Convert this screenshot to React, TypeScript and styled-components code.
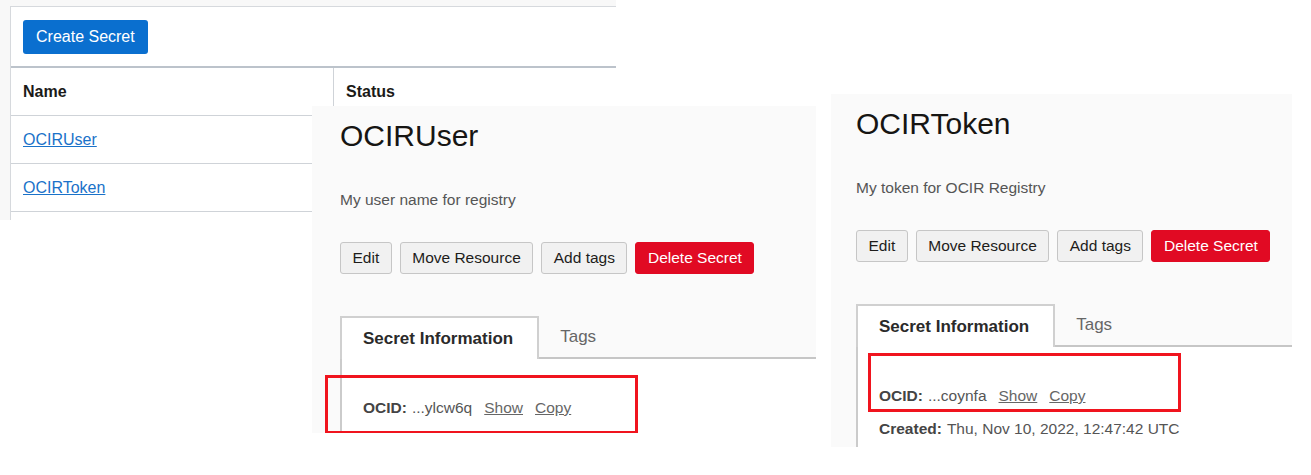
import styled, { createGlobalStyle } from "styled-components";

const GlobalStyle = createGlobalStyle`
  html, body {
    margin: 0;
    padding: 0;
    background: #fff;
  }
  body {
    font-family: "Liberation Sans", Arial, Helvetica, sans-serif;
    color: #161513;
  }
  * {
    box-sizing: border-box;
  }
`;

interface Secret {
  name: string;
  description: string;
  ocid: string;
  created?: string;
}

const secrets: Secret[] = [
  { name: "OCIRUser", description: "My user name for registry", ocid: "...ylcw6q" },
  {
    name: "OCIRToken",
    description: "My token for OCIR Registry",
    ocid: "...coynfa",
    created: "Thu, Nov 10, 2022, 12:47:42 UTC",
  },
];

// where each screenshot sits on the collage
const shots = [
  { x: 312, y: 106, w: 504, h: 327, pad: 28, box: { x: 13, y: 269, w: 313, h: 59 } },
  { x: 831, y: 94, w: 461, h: 353, pad: 25, box: { x: 37, y: 259, w: 313, h: 59 } },
];

const SecretDetail = ({ secret, pad, box }: { secret: Secret; pad: number; box: { x: number; y: number; w: number; h: number } }) => (
  <DetailPanel $pad={pad}>
    <Title>{secret.name}</Title>
    <Description>{secret.description}</Description>
    <Actions>
      <ActionButton>Edit</ActionButton>
      <ActionButton>Move Resource</ActionButton>
      <ActionButton>Add tags</ActionButton>
      <ActionButton $danger>Delete Secret</ActionButton>
    </Actions>
    <TabStrip>
      <Tab $active>Secret Information</Tab>
      <Tab>Tags</Tab>
      <TabFiller />
    </TabStrip>
    <TabBody>
      <InfoRow>
        <Label>OCID:</Label>
        <Value>{secret.ocid}</Value>
        <InfoLink>Show</InfoLink>
        <InfoLink>Copy</InfoLink>
      </InfoRow>
      {secret.created && (
        <InfoRow $spaced>
          <Label>Created:</Label>
          <Value>{secret.created}</Value>
        </InfoRow>
      )}
    </TabBody>
    <Highlight style={{ left: box.x, top: box.y, width: box.w, height: box.h }} />
  </DetailPanel>
);

const App = () => {
  return (
    <>
      <GlobalStyle />
      <Canvas>
        <Shot $x={0} $y={0} $w={616} $h={220}>
          <ListShot>
            <ListPanel>
              <Toolbar>
                <PrimaryButton>Create Secret</PrimaryButton>
              </Toolbar>
              <Table>
                <HeadCell $first>Name</HeadCell>
                <HeadCell>Status</HeadCell>
                {secrets.map((s) => (
                  <Row key={s.name}>
                    <Cell $first>
                      <NameLink href="#">{s.name}</NameLink>
                    </Cell>
                    <Cell />
                  </Row>
                ))}
              </Table>
            </ListPanel>
          </ListShot>
        </Shot>
        {secrets.map((s, i) => (
          <Shot key={s.name} $x={shots[i].x} $y={shots[i].y} $w={shots[i].w} $h={shots[i].h}>
            <SecretDetail secret={s} pad={shots[i].pad} box={shots[i].box} />
          </Shot>
        ))}
      </Canvas>
    </>
  );
};

export default App;

const Canvas = styled.div`
  position: relative;
  width: 1311px;
  height: 475px;
  overflow: hidden;
  background: #fff;
`;

const Shot = styled.div<{ $x: number; $y: number; $w: number; $h: number }>`
  position: absolute;
  left: ${(p) => p.$x}px;
  top: ${(p) => p.$y}px;
  width: ${(p) => p.$w}px;
  height: ${(p) => p.$h}px;
  overflow: hidden;
`;

const ListShot = styled.div`
  height: 100%;
  padding: 6px 0 0 10px;
  background: #f8f8f8;
`;

const ListPanel = styled.div`
  height: 100%;
  background: #fff;
  border-top: 1px solid #d6d9dd;
  border-left: 1px solid #d6d9dd;
`;

const Toolbar = styled.div`
  height: 59px;
  padding: 13px 12px 0;
`;

const PrimaryButton = styled.button`
  height: 34px;
  padding: 0 13px;
  border: none;
  border-radius: 3px;
  background: #0a6fcf;
  color: #fff;
  font-family: inherit;
  font-size: 16px;
`;

const Table = styled.div`
  display: grid;
  grid-template-columns: 323px 1fr;
  border-top: 2px solid #bcc3cb;
`;

const Row = styled.div`
  display: contents;
`;

const Cell = styled.div<{ $first?: boolean }>`
  height: 48px;
  display: flex;
  align-items: center;
  padding-left: 12px;
  border-bottom: 1px solid #cfd3d8;
  border-right: ${(p) => (p.$first ? "1px solid #cfd3d8" : "none")};
  font-size: 16px;
`;

const HeadCell = styled(Cell)`
  font-weight: 700;
  color: #1b1a18;
`;

const NameLink = styled.a`
  color: #1a72c9;
  text-decoration: underline;
`;

const DetailPanel = styled.div<{ $pad: number }>`
  position: relative;
  height: 100%;
  display: flex;
  flex-direction: column;
  padding: 12px 0 0 ${(p) => p.$pad}px;
  background: #fafafa;
`;

const Title = styled.h1`
  margin: 0;
  font-size: 30px;
  line-height: 36px;
  font-weight: 400;
  color: #161513;
`;

const Description = styled.p`
  margin: 36px 0 0;
  font-size: 15.5px;
  line-height: 20px;
  color: #555;
`;

const Actions = styled.div`
  display: flex;
  gap: 8px;
  margin-top: 32px;
`;

const ActionButton = styled.button<{ $danger?: boolean }>`
  height: 32px;
  padding: 0 11.5px;
  border: 1px solid ${(p) => (p.$danger ? "#e10a23" : "#c6c6c6")};
  border-radius: 3px;
  background: ${(p) => (p.$danger ? "#e10a23" : "#f1f1f1")};
  color: ${(p) => (p.$danger ? "#fff" : "#1e1d1b")};
  font-family: inherit;
  font-size: 15.5px;
`;

const TabStrip = styled.div`
  display: flex;
  height: 43px;
  margin-top: 42px;
`;

const Tab = styled.div<{ $active?: boolean }>`
  display: flex;
  align-items: center;
  padding: 0 24px 0 21px;
  font-size: 17px;
  font-weight: ${(p) => (p.$active ? 700 : 400)};
  color: ${(p) => (p.$active ? "#2a2a2a" : "#666")};
  background: ${(p) => (p.$active ? "#fff" : "transparent")};
  border: ${(p) => (p.$active ? "2px solid #d0d0d0" : "none")};
  border-bottom: ${(p) => (p.$active ? "none" : "2px solid #c6c6c6")};
`;

const TabFiller = styled.div`
  flex: 1;
  border-bottom: 2px solid #c6c6c6;
`;

const TabBody = styled.div`
  flex: 1;
  padding: 39px 0 0 21px;
  background: #fff;
  border-left: 2px solid #cbcbcb;
`;

const InfoRow = styled.div<{ $spaced?: boolean }>`
  display: flex;
  align-items: baseline;
  margin-top: ${(p) => (p.$spaced ? 13 : 0)}px;
  font-size: 15.5px;
  line-height: 20px;
  color: #555;
`;

const Label = styled.span`
  font-weight: 700;
  color: #444;
  margin-right: 5px;
`;

const Value = styled.span`
  color: #555;
`;

const InfoLink = styled.span`
  margin-left: 12px;
  color: #666;
  text-decoration: underline;
`;

const Highlight = styled.div`
  position: absolute;
  border: 3px solid #f0141e;
  pointer-events: none;
`;
